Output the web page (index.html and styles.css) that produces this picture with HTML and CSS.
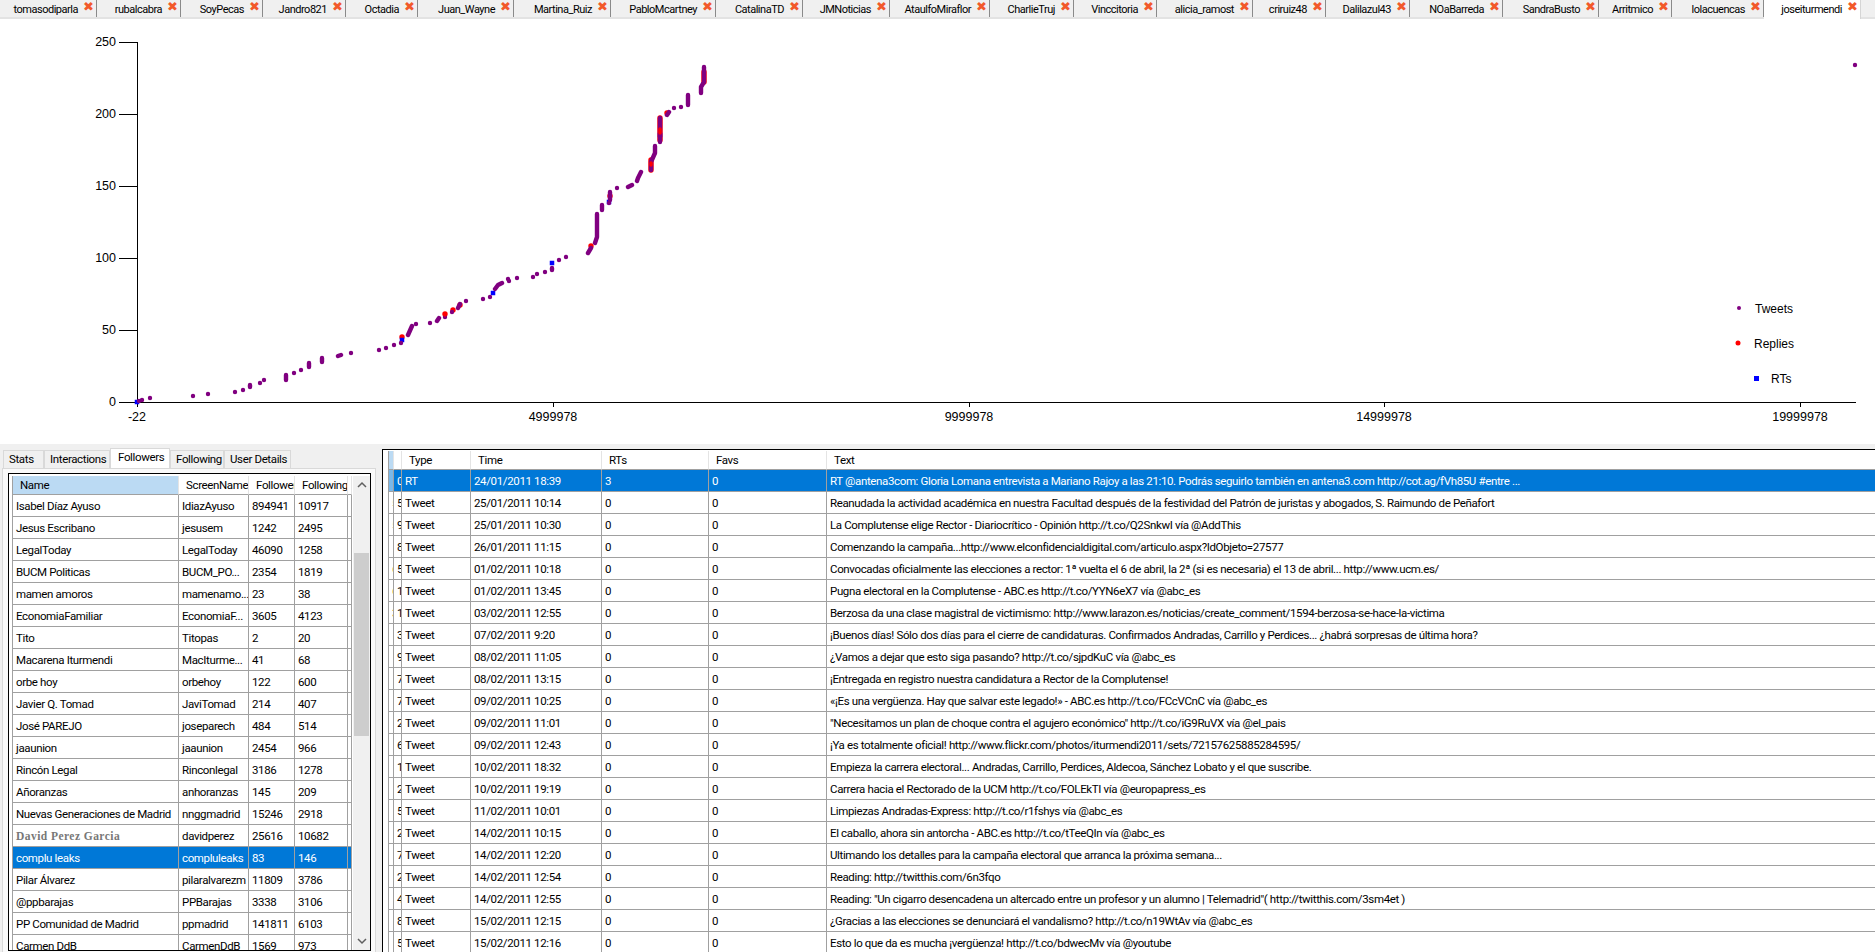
FILE: index.html
```html
<!DOCTYPE html>
<html lang="es">
<head>
<meta charset="utf-8">
<title>Twitter user timeline</title>
<link rel="stylesheet" href="styles.css">
</head>
<body>
<div class="tabbar">
  <div class="tab">tomasodiparla<span class="x">✖</span></div>
  <div class="tab">rubalcabra<span class="x">✖</span></div>
  <div class="tab">SoyPecas<span class="x">✖</span></div>
  <div class="tab">Jandro821<span class="x">✖</span></div>
  <div class="tab">Octadia<span class="x">✖</span></div>
  <div class="tab">Juan_Wayne<span class="x">✖</span></div>
  <div class="tab">Martina_Ruiz<span class="x">✖</span></div>
  <div class="tab">PabloMcartney<span class="x">✖</span></div>
  <div class="tab">CatalinaTD<span class="x">✖</span></div>
  <div class="tab">JMNoticias<span class="x">✖</span></div>
  <div class="tab">AtaulfoMiraflor<span class="x">✖</span></div>
  <div class="tab">CharlieTruj<span class="x">✖</span></div>
  <div class="tab">Vinccitoria<span class="x">✖</span></div>
  <div class="tab">alicia_ramost<span class="x">✖</span></div>
  <div class="tab">criruiz48<span class="x">✖</span></div>
  <div class="tab">Dalilazul43<span class="x">✖</span></div>
  <div class="tab">NOaBarreda<span class="x">✖</span></div>
  <div class="tab">SandraBusto<span class="x">✖</span></div>
  <div class="tab">Arritmico<span class="x">✖</span></div>
  <div class="tab">lolacuencas<span class="x">✖</span></div>
  <div class="tab active">joseiturmendi<span class="x">✖</span></div>
</div>

<svg class="chart" viewBox="0 19 1875 425" width="1875" height="425">
  <g class="axis">
    <path d="M137 42V402H1856"/>
    <path d="M119 42H137M119 114H137M119 186H137M119 258H137M119 330H137M119 402H137"/>
    <path d="M137 402V407M553 402V407M969 402V407M1384 402V407M1800 402V407"/>
  </g>
  <g class="ylab">
    <text x="116" y="46">250</text>
    <text x="116" y="118">200</text>
    <text x="116" y="190">150</text>
    <text x="116" y="262">100</text>
    <text x="116" y="334">50</text>
    <text x="116" y="406">0</text>
  </g>
  <g class="xlab">
    <text x="137" y="421">-22</text>
    <text x="553" y="421">4999978</text>
    <text x="969" y="421">9999978</text>
    <text x="1384" y="421">14999978</text>
    <text x="1800" y="421">19999978</text>
  </g>
  <path class="red" d="M402 337h0M445 314h0M453 310h0M460 305h0M591 246h0M610 196h0M651 170V160M660 140V118M667 113h0M704 82V72"/>
  <path class="blue" d="M137 402h0M402 340h0M493 293h0M552 263h0M609 202h0M660 135h0"/>
  <path class="purple" d="M139 401h0M142 400h0M150 398h0M193 396h0M208 394h0M235 392h0M243 390h0M250 387V385M260 383h0M264 380h0M286 380V375M294 373h0M301 370h0M309 367V363M322 362V358M338 356L341 355M351 353h0M379 350h0M386 348h0M394 345h0M401 343h0M408 335L412 326M416 324h0M430 323h0M437 321L439 318M445 317h0M452 312h0M458 308L460 304M466 301h0M483 299h0M490 297h0M495 289L498 285L502 283M509 281h0M508 279h0M517 278h0M533 277h0M537 274h0M545 272h0M552 270V268M559 260h0M566 257h0M588 253L591 248M595 243L597 237V214M602 210V205M609 203h0M610 200V192M617 188h0M628 187L632 185M637 181L638 178L641 172M651 170V162L655 153V146M660 142V118M667 115L669 112M674 108h0M681 107h0M688 105V95M701 93V87L704 82V67M1855 65h0"/>
  <path class="red thin" d="M660 133V129M651 165V163M445 315h0"/>
  <g class="legend">
    <circle class="lp" cx="1739" cy="308" r="2"/>
    <text x="1755" y="313">Tweets</text>
    <circle class="lr" cx="1738" cy="343" r="2.5"/>
    <text x="1754" y="348">Replies</text>
    <rect class="lb" x="1754" y="376" width="5" height="5"/>
    <text x="1771" y="383">RTs</text>
  </g>
</svg>

<div class="bottom">
  <div class="left">
    <div class="subtabs">
      <div class="st st1">Stats</div>
      <div class="st st2">Interactions</div>
      <div class="st st3 on">Followers</div>
      <div class="st st4">Following</div>
      <div class="st st5">User Details</div>
    </div>
    <div class="tabpage">
      <div class="gridbox">
        <table class="grid users">
          <colgroup><col class="u1"><col class="u2"><col class="u3"><col class="u4"><col class="u5"></colgroup>
          <thead><tr><th class="sel">Name</th><th>ScreenName</th><th>Followers</th><th>Following</th><th></th></tr></thead>
          <tbody>
            <tr><td>Isabel Díaz Ayuso</td><td>IdiazAyuso</td><td>894941</td><td>10917</td><td class="frag">2</td></tr>
            <tr><td>Jesus Escribano</td><td>jesusem</td><td>1242</td><td>2495</td><td class="frag">2</td></tr>
            <tr><td>LegalToday</td><td>LegalToday</td><td>46090</td><td>1258</td><td class="frag">2</td></tr>
            <tr><td>BUCM Politicas</td><td>BUCM_PO...</td><td>2354</td><td>1819</td><td class="frag">1</td></tr>
            <tr><td>mamen amoros</td><td>mamenamo...</td><td>23</td><td>38</td><td class="frag">2</td></tr>
            <tr><td>EconomiaFamiliar</td><td>EconomiaF...</td><td>3605</td><td>4123</td><td class="frag">2</td></tr>
            <tr><td>Tito</td><td>Titopas</td><td>2</td><td>20</td><td class="frag">2</td></tr>
            <tr><td>Macarena Iturmendi</td><td>MacIturme...</td><td>41</td><td>68</td><td class="frag">2</td></tr>
            <tr><td>orbe hoy</td><td>orbehoy</td><td>122</td><td>600</td><td class="frag">1</td></tr>
            <tr><td>Javier Q. Tomad</td><td>JaviTomad</td><td>214</td><td>407</td><td class="frag">2</td></tr>
            <tr><td>José PAREJO</td><td>joseparech</td><td>484</td><td>514</td><td class="frag">2</td></tr>
            <tr><td>jaaunion</td><td>jaaunion</td><td>2454</td><td>966</td><td class="frag"></td></tr>
            <tr><td>Rincón Legal</td><td>Rinconlegal</td><td>3186</td><td>1278</td><td class="frag">4</td></tr>
            <tr><td>Añoranzas</td><td>anhoranzas</td><td>145</td><td>209</td><td class="frag">2</td></tr>
            <tr><td>Nuevas Generaciones de Madrid</td><td>nnggmadrid</td><td>15246</td><td>2918</td><td class="frag">1</td></tr>
            <tr><td class="fancy">David Perez Garcia</td><td>davidperez</td><td>25616</td><td>10682</td><td class="frag">6</td></tr>
            <tr class="selrow"><td>complu leaks</td><td>compluleaks</td><td>83</td><td>146</td><td class="frag">2</td></tr>
            <tr><td>Pilar Álvarez</td><td>pilaralvarezm</td><td>11809</td><td>3786</td><td class="frag">1</td></tr>
            <tr><td>@ppbarajas</td><td>PPBarajas</td><td>3338</td><td>3106</td><td class="frag">2</td></tr>
            <tr><td>PP Comunidad de Madrid</td><td>ppmadrid</td><td>141811</td><td>6103</td><td class="frag">2</td></tr>
            <tr><td>Carmen DdB</td><td>CarmenDdB</td><td>1569</td><td>973</td><td class="frag">2</td></tr>
          </tbody>
        </table>
        <div class="scrollbar">
          <div class="arrow"><svg width="10" height="7" viewBox="0 0 10 7"><path d="M1 6L5 2L9 6"/></svg></div>
          <div class="track"><div class="thumb"></div></div>
          <div class="arrow"><svg width="10" height="7" viewBox="0 0 10 7"><path d="M1 1L5 5L9 1"/></svg></div>
        </div>
      </div>
    </div>
  </div>
  <div class="right">
    <table class="grid tweets">
      <colgroup><col class="t1"><col class="t2"><col class="t3"><col class="t4"><col class="t5"><col class="t6"><col class="t7"></colgroup>
      <thead><tr><th class="sel"></th><th class="sel2"></th><th>Type</th><th>Time</th><th>RTs</th><th>Favs</th><th>Text</th></tr></thead>
      <tbody>
        <tr class="selrow"><td class="g1">0</td><td class="g2">0</td><td>RT</td><td>24/01/2011 18:39</td><td>3</td><td>0</td><td>RT @antena3com: Gloria Lomana entrevista a Mariano Rajoy a las 21:10. Podrás seguirlo también en antena3.com http://cot.ag/fVh85U #entre ...</td></tr>
        <tr><td class="g1">5</td><td class="g2">5</td><td>Tweet</td><td>25/01/2011 10:14</td><td>0</td><td>0</td><td>Reanudada la actividad académica en nuestra Facultad después de la festividad del Patrón de juristas y abogados, S. Raimundo de Peñafort</td></tr>
        <tr><td class="g1">5</td><td class="g2">9</td><td>Tweet</td><td>25/01/2011 10:30</td><td>0</td><td>0</td><td>La Complutense elige Rector - Diariocrítico - Opinión http://t.co/Q2SnkwI vía @AddThis</td></tr>
        <tr><td class="g1"></td><td class="g2">8</td><td>Tweet</td><td>26/01/2011 11:15</td><td>0</td><td>0</td><td>Comenzando la campaña...http://www.elconfidencialdigital.com/articulo.aspx?IdObjeto=27577</td></tr>
        <tr><td class="g1">6</td><td class="g2">5</td><td>Tweet</td><td>01/02/2011 10:18</td><td>0</td><td>0</td><td>Convocadas oficialmente las elecciones a rector: 1ª vuelta el 6 de abril, la 2ª (si es necesaria) el 13 de abril... http://www.ucm.es/</td></tr>
        <tr><td class="g1">6</td><td class="g2">1</td><td>Tweet</td><td>01/02/2011 13:45</td><td>0</td><td>0</td><td>Pugna electoral en la Complutense - ABC.es http://t.co/YYN6eX7 vía @abc_es</td></tr>
        <tr><td class="g1">3</td><td class="g2">1</td><td>Tweet</td><td>03/02/2011 12:55</td><td>0</td><td>0</td><td>Berzosa da una clase magistral de victimismo: http://www.larazon.es/noticias/create_comment/1594-berzosa-se-hace-la-victima</td></tr>
        <tr><td class="g1"></td><td class="g2">3</td><td>Tweet</td><td>07/02/2011 9:20</td><td>0</td><td>0</td><td>¡Buenos días! Sólo dos días para el cierre de candidaturas. Confirmados Andradas, Carrillo y Perdices... ¿habrá sorpresas de última hora?</td></tr>
        <tr><td class="g1"></td><td class="g2">9</td><td>Tweet</td><td>08/02/2011 11:05</td><td>0</td><td>0</td><td>¿Vamos a dejar que esto siga pasando?  http://t.co/sjpdKuC vía @abc_es</td></tr>
        <tr><td class="g1"></td><td class="g2">7</td><td>Tweet</td><td>08/02/2011 13:15</td><td>0</td><td>0</td><td>¡Entregada en registro nuestra candidatura a Rector de la Complutense!</td></tr>
        <tr><td class="g1"></td><td class="g2">7</td><td>Tweet</td><td>09/02/2011 10:25</td><td>0</td><td>0</td><td>«¡Es una vergüenza. Hay que salvar este legado!» - ABC.es http://t.co/FCcVCnC vía @abc_es</td></tr>
        <tr><td class="g1"></td><td class="g2">2</td><td>Tweet</td><td>09/02/2011 11:01</td><td>0</td><td>0</td><td>"Necesitamos un plan de choque contra el agujero económico" http://t.co/iG9RuVX vía @el_pais</td></tr>
        <tr><td class="g1"></td><td class="g2">6</td><td>Tweet</td><td>09/02/2011 12:43</td><td>0</td><td>0</td><td>¡Ya es totalmente oficial! http://www.flickr.com/photos/iturmendi2011/sets/72157625885284595/</td></tr>
        <tr><td class="g1"></td><td class="g2">1</td><td>Tweet</td><td>10/02/2011 18:32</td><td>0</td><td>0</td><td>Empieza la carrera electoral... Andradas, Carrillo, Perdices, Aldecoa, Sánchez Lobato y el que suscribe.</td></tr>
        <tr><td class="g1"></td><td class="g2">2</td><td>Tweet</td><td>10/02/2011 19:19</td><td>0</td><td>0</td><td>Carrera hacia el Rectorado de la UCM http://t.co/FOLEkTI vía @europapress_es</td></tr>
        <tr><td class="g1"></td><td class="g2">5</td><td>Tweet</td><td>11/02/2011 10:01</td><td>0</td><td>0</td><td>Limpiezas Andradas-Express: http://t.co/r1fshys vía @abc_es</td></tr>
        <tr><td class="g1"></td><td class="g2">2</td><td>Tweet</td><td>14/02/2011 10:15</td><td>0</td><td>0</td><td>El caballo, ahora sin antorcha - ABC.es http://t.co/tTeeQIn vía @abc_es</td></tr>
        <tr><td class="g1"></td><td class="g2">7</td><td>Tweet</td><td>14/02/2011 12:20</td><td>0</td><td>0</td><td>Ultimando los detalles para la campaña electoral que arranca la próxima semana...</td></tr>
        <tr><td class="g1"></td><td class="g2">2</td><td>Tweet</td><td>14/02/2011 12:54</td><td>0</td><td>0</td><td>Reading: http://twitthis.com/6n3fqo</td></tr>
        <tr><td class="g1"></td><td class="g2">4</td><td>Tweet</td><td>14/02/2011 12:55</td><td>0</td><td>0</td><td>Reading: "Un cigarro desencadena un altercado entre un profesor y un alumno | Telemadrid"( http://twitthis.com/3sm4et )</td></tr>
        <tr><td class="g1"></td><td class="g2">8</td><td>Tweet</td><td>15/02/2011 12:15</td><td>0</td><td>0</td><td>¿Gracias a las elecciones se denunciará el vandalismo? http://t.co/n19WtAv vía @abc_es</td></tr>
        <tr><td class="g1"></td><td class="g2">5</td><td>Tweet</td><td>15/02/2011 12:16</td><td>0</td><td>0</td><td>Esto lo que da es mucha ¡vergüenza! http://t.co/bdwecMv vía @youtube</td></tr>
      </tbody>
    </table>
  </div>
</div>
</body>
</html>
```
FILE: styles.css
```css
* { box-sizing: border-box; }
html, body { margin: 0; padding: 0; height: 952px; overflow: hidden; background: #fff; }
body { font-family: Roboto, "Liberation Sans", sans-serif; font-size: 11.5px; letter-spacing: -0.36px; color: #000; display: flex; flex-direction: column; }

.tabbar { display: flex; height: 19px; flex: none; background: #f0f0f0; border-bottom: 2px solid #e3e3e3; }
.tab { display: flex; justify-content: flex-end; align-items: center; gap: 5px; height: 17px; padding: 1px 3px 0 0; font-size: 11px; letter-spacing: -0.48px; border-right: 1px solid #8a8a8a; white-space: nowrap; }
.tab.active { background: #fff; height: 19px; padding-bottom: 2px; border-right: 1px solid #d5d5d5; }
.x { color: #f2592a; font-size: 13px; line-height: 12px; width: 10px; margin-top: -5px; letter-spacing: 0; font-family: "DejaVu Sans", sans-serif; }
.tab:nth-child(1), .tab:nth-child(7), .tab:nth-child(21) { width: 97px; }
.tab:nth-child(2), .tab:nth-child(12), .tab:nth-child(16) { width: 84px; }
.tab:nth-child(3) { width: 82px; }
.tab:nth-child(4), .tab:nth-child(13) { width: 83px; }
.tab:nth-child(5) { width: 72px; }
.tab:nth-child(6), .tab:nth-child(14), .tab:nth-child(18) { width: 96px; }
.tab:nth-child(8) { width: 105px; }
.tab:nth-child(9), .tab:nth-child(10) { width: 87px; }
.tab:nth-child(11) { width: 100px; }
.tab:nth-child(15), .tab:nth-child(19) { width: 73px; }
.tab:nth-child(17) { width: 93px; }
.tab:nth-child(20) { width: 92px; }

.chart { display: block; flex: none; background: #fff; font-family: "Liberation Sans", sans-serif; font-size: 12.5px; letter-spacing: 0; }
.axis path { fill: none; stroke: #000; stroke-width: 1; shape-rendering: crispEdges; }
.ylab text { text-anchor: end; }
.xlab text { text-anchor: middle; }
.purple, .red, .blue { fill: none; stroke-linecap: round; stroke-linejoin: round; }
.purple { stroke: #800080; stroke-width: 4.4; }
.red { stroke: #f00; stroke-width: 5.4; }
.red.thin { stroke-width: 3.5; }
.blue { stroke: #00f; stroke-width: 4.5; stroke-linecap: square; }
.legend text { font-size: 12px; }
.lp { fill: #800080; }
.lr { fill: #f00; }
.lb { fill: #00f; }

.bottom { flex: 1; display: flex; min-height: 0; background: #f0f0f0; overflow: hidden; }
.left { width: 382px; flex: none; padding: 4px 0 0 2px; display: flex; flex-direction: column; }
.subtabs { display: flex; height: 20px; padding-left: 1px; flex: none; }
.st { margin-top: 2px; background: #f0f0f0; border: 1px solid #d9d9d9; border-bottom: 0; padding-left: 5px; line-height: 16px; white-space: nowrap; }
.st.on { margin-top: 0; background: #fff; line-height: 16px; padding-left: 7px; }
.st1 { width: 41px; }
.st2 { width: 66px; }
.st3 { width: 60px; }
.st4 { width: 54px; }
.st5 { width: 67px; }
.tabpage { width: 374px; flex: 1; min-height: 0; background: #fafafa; border: 1px solid #d9d9d9; border-bottom: 0; padding: 4px 4px 1px 5px; }
.gridbox { height: 100%; width: 363px; background: #fff; border: 1px solid #000; padding: 2px 0 0 3px; display: flex; overflow: hidden; }

.grid { border-collapse: separate; border-spacing: 0; table-layout: fixed; flex: none; align-self: flex-start; }
.grid th, .grid td { padding: 0 0 0 3px; white-space: nowrap; overflow: hidden; font-weight: 400; text-align: left; }
.grid th { height: 19px; border-right: 1px solid #e4e4e4; border-bottom: 1px solid #a0a0a0; padding-left: 7px; }
.grid td { height: 22px; border-right: 1px solid #a0a0a0; border-bottom: 1px solid #a0a0a0; padding-top: 1px; }
.grid th.sel { background: #bbdaf3; }
.grid .selrow td { background: #0078d7; color: #fff; }
.users { width: 340px; border-left: 1px solid #a0a0a0; }
.u1 { width: 166px; }
.u2 { width: 70px; }
.u3 { width: 46px; }
.u4 { width: 53px; }
.u5 { width: 4px; }
.frag { color: #d98a2a; }
.fancy { font-family: "Liberation Serif", serif; font-weight: 700 !important; color: #777; letter-spacing: .45px; }

.scrollbar { width: 18px; margin-left: 1px; display: flex; flex-direction: column; background: #f0f0f0; }
.arrow { height: 17px; display: flex; align-items: center; justify-content: center; flex: none; }
.arrow path { fill: none; stroke: #606060; stroke-width: 1.5; }
.track { flex: 1; padding-top: 60px; }
.thumb { height: 183px; width: 15px; margin-left: 1px; background: #cdcdcd; }

.right { flex: 1; margin-top: 5px; background: #fff; border-left: 1px solid #000; border-top: 1px solid #000; padding: 1px 0 0 5px; overflow: hidden; min-width: 0; }
.tweets { width: 1487px; border-left: 1px solid #a0a0a0; }
.tweets th { padding-left: 7px; }
.t1 { width: 5px; }
.t2 { width: 8px; }
.t3 { width: 69px; }
.t4 { width: 131px; }
.t5 { width: 107px; }
.t6 { width: 118px; }
.t7 { width: 1049px; }
.grid th.sel2 { padding: 0; }
.grid .g1 { color: #d98a2a; padding-left: 3px; }
.grid .selrow .g1 { background: #7ab8e8; color: #7ab8e8; }
.grid .g2 { padding-left: 3px; }
```
